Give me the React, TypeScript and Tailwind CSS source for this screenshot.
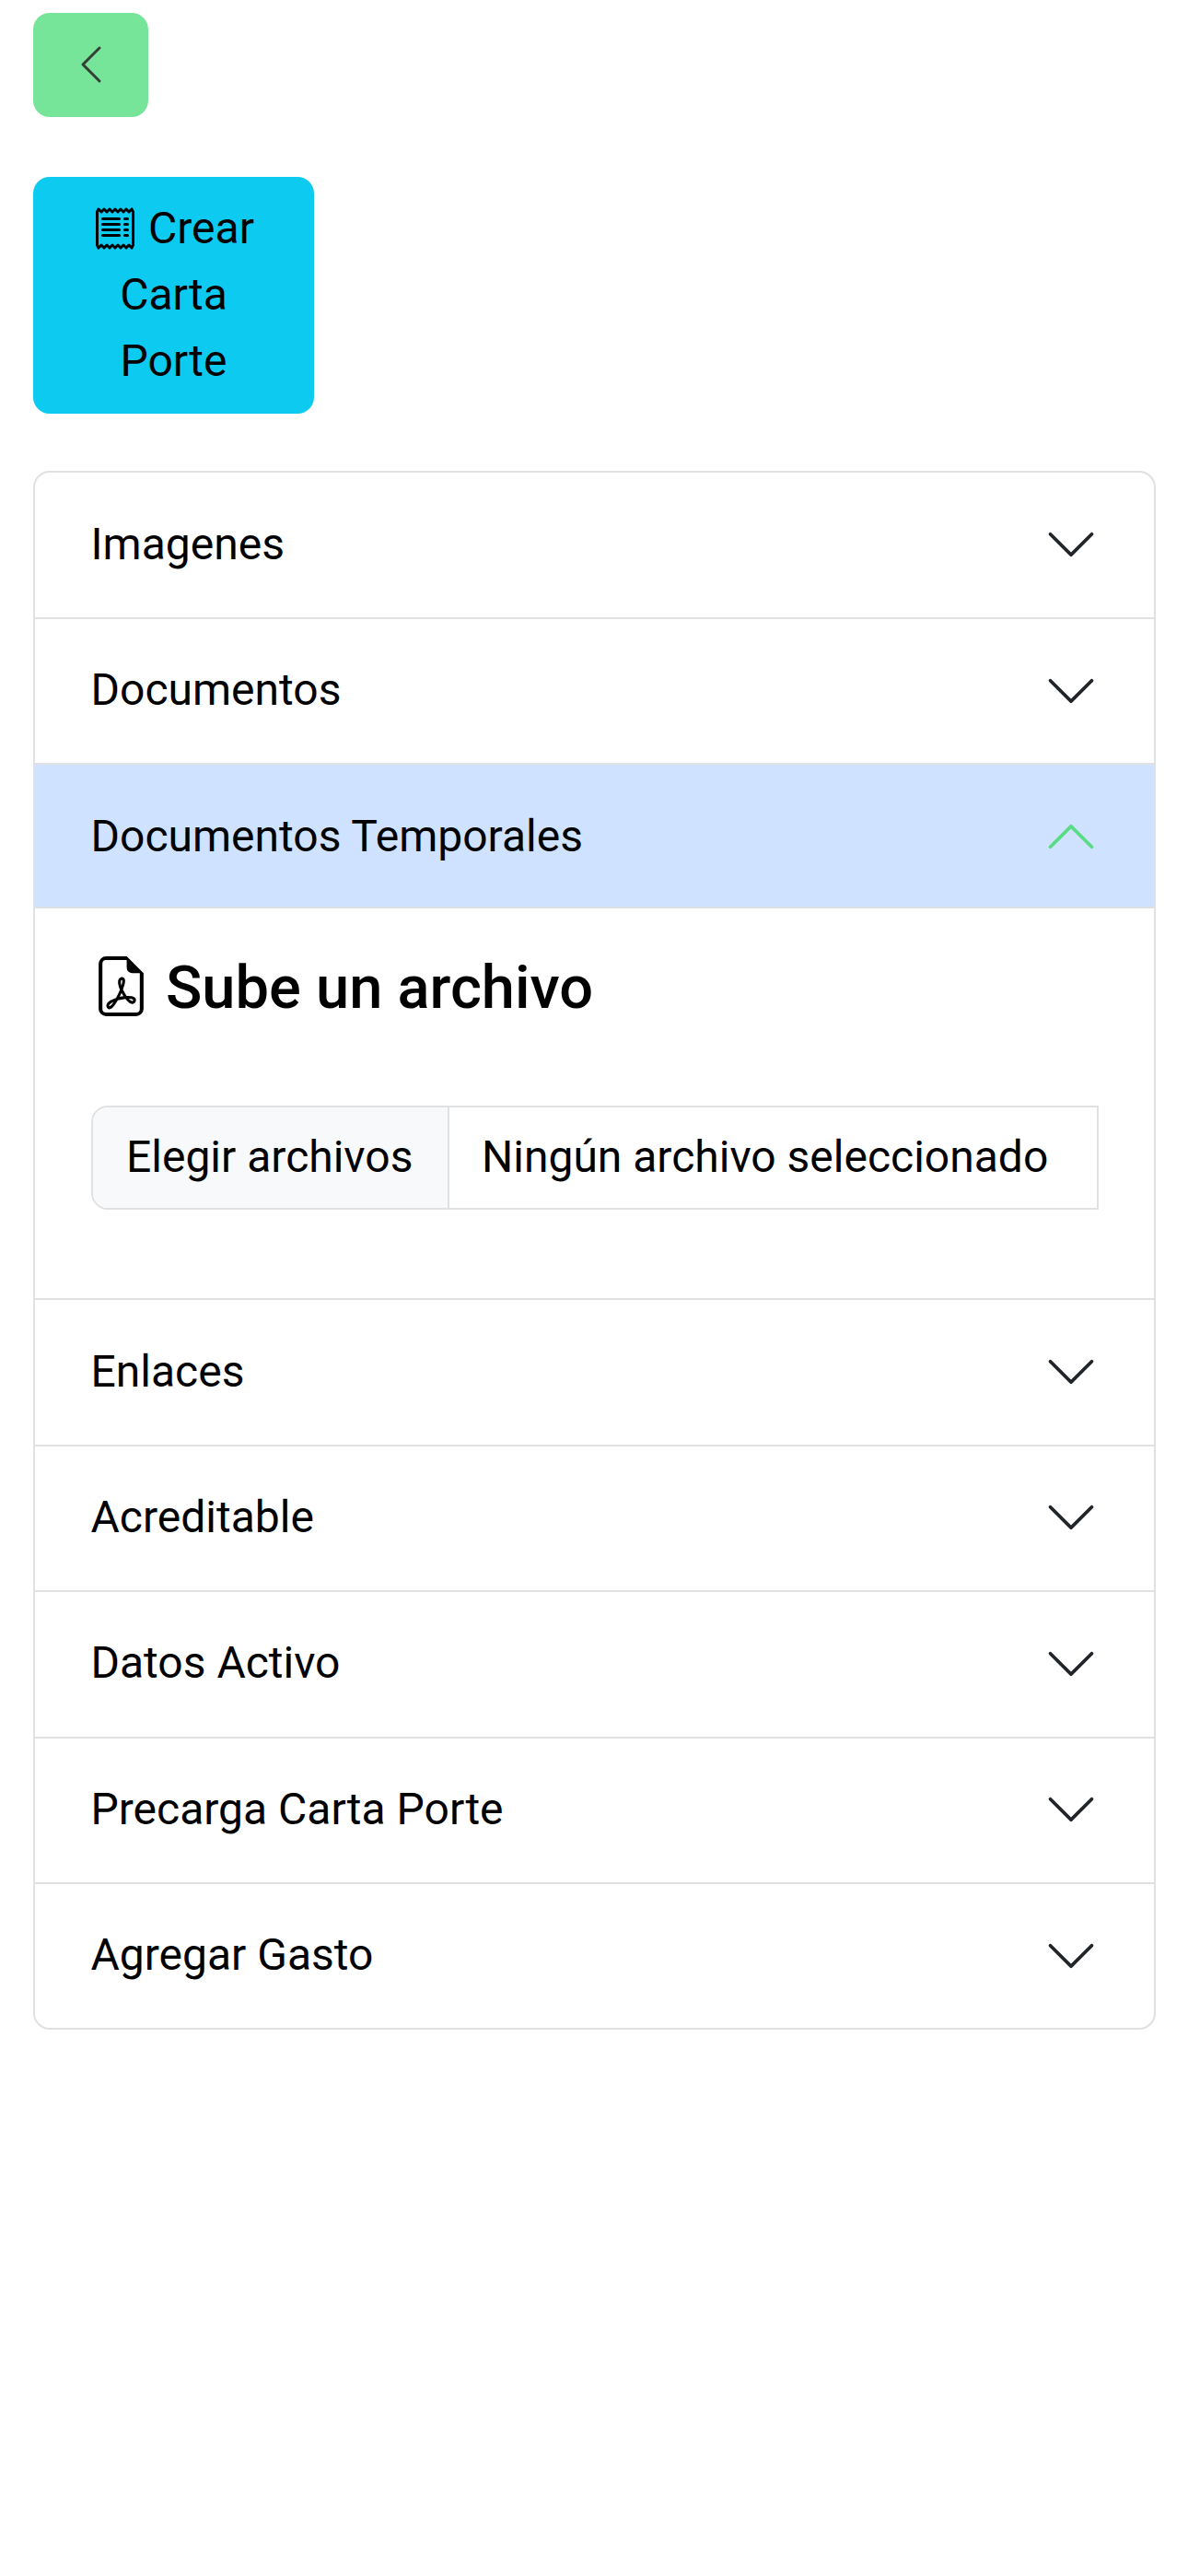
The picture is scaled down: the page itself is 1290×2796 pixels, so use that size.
import { BsChevronDown, BsChevronLeft, BsChevronUp, BsFileEarmarkPdf, BsReceipt } from "react-icons/bs";

function Row({ title }: { title: string }) {
  return (
    <button className="flex h-[158.4px] w-full shrink-0 items-center justify-between border-t-2 border-[#dfe1e3] pb-[2px] pl-[60.5px] pr-[60.5px] text-left first:h-[157px] first:border-t-0">
      <span>{title}</span>
      <BsChevronDown className="mt-px size-[60px] text-[#212529]" />
    </button>
  );
}

export default function App() {
  return (
    <main className="flex h-[2796px] w-[1290px] flex-col items-start overflow-hidden bg-white pl-9 pt-[14px] font-['Roboto',sans-serif] text-[48px] leading-[72px] text-black">
      <button className="flex h-[113px] w-[125px] items-center justify-center rounded-[18px] bg-[#76e599] pb-px">
        <BsChevronLeft className="size-12 text-[#353f38]" />
      </button>

      <button className="mt-[65px] flex h-[257px] w-[305px] items-center justify-center rounded-[18px] bg-[#0dcaf0] px-[60px] pb-px text-center">
        <span>
          <BsReceipt className="inline-block size-12 align-[-8px]" /> Crear Carta Porte
        </span>
      </button>

      <section className="mt-[62px] flex w-[1219px] flex-col overflow-hidden rounded-[18px] border-2 border-[#dfe1e3]">
        <Row title="Imagenes" />
        <Row title="Documentos" />
        <div className="border-t-2 border-[#dfe1e3]">
          <button className="flex h-[156px] w-full items-center justify-between border-b-2 border-[#dbe0e4] bg-[#cfe2ff] pl-[60.5px] pr-[60.5px] pt-px text-left">
            <span>Documentos Temporales</span>
            <BsChevronUp className="mt-px size-[60px] text-[#58dc84]" />
          </button>
          <div className="h-[423px] px-[60.5px] pt-[47px]">
            <h4 className="flex items-center text-[65px] font-medium leading-[78px]">
              <BsFileEarmarkPdf className="mb-[4px] mr-[16.5px] size-[65px]" />
              Sube un archivo
            </h4>
            <div className="mt-[89px] flex h-[113px] w-[1094.5px] overflow-hidden rounded-l-[18px] border-2 border-[#dfe1e3]">
              <span className="flex w-[387px] items-center whitespace-nowrap border-r-2 border-[#dfe1e3] bg-[#f8f9fa] pb-[2px] pl-[36.5px]">Elegir archivos</span>
              <span className="flex items-center whitespace-nowrap pb-[2px] pl-[35.5px]">Ningún archivo seleccionado</span>
            </div>
          </div>
        </div>
        <Row title="Enlaces" />
        <Row title="Acreditable" />
        <Row title="Datos Activo" />
        <Row title="Precarga Carta Porte" />
        <Row title="Agregar Gasto" />
      </section>
    </main>
  );
}
